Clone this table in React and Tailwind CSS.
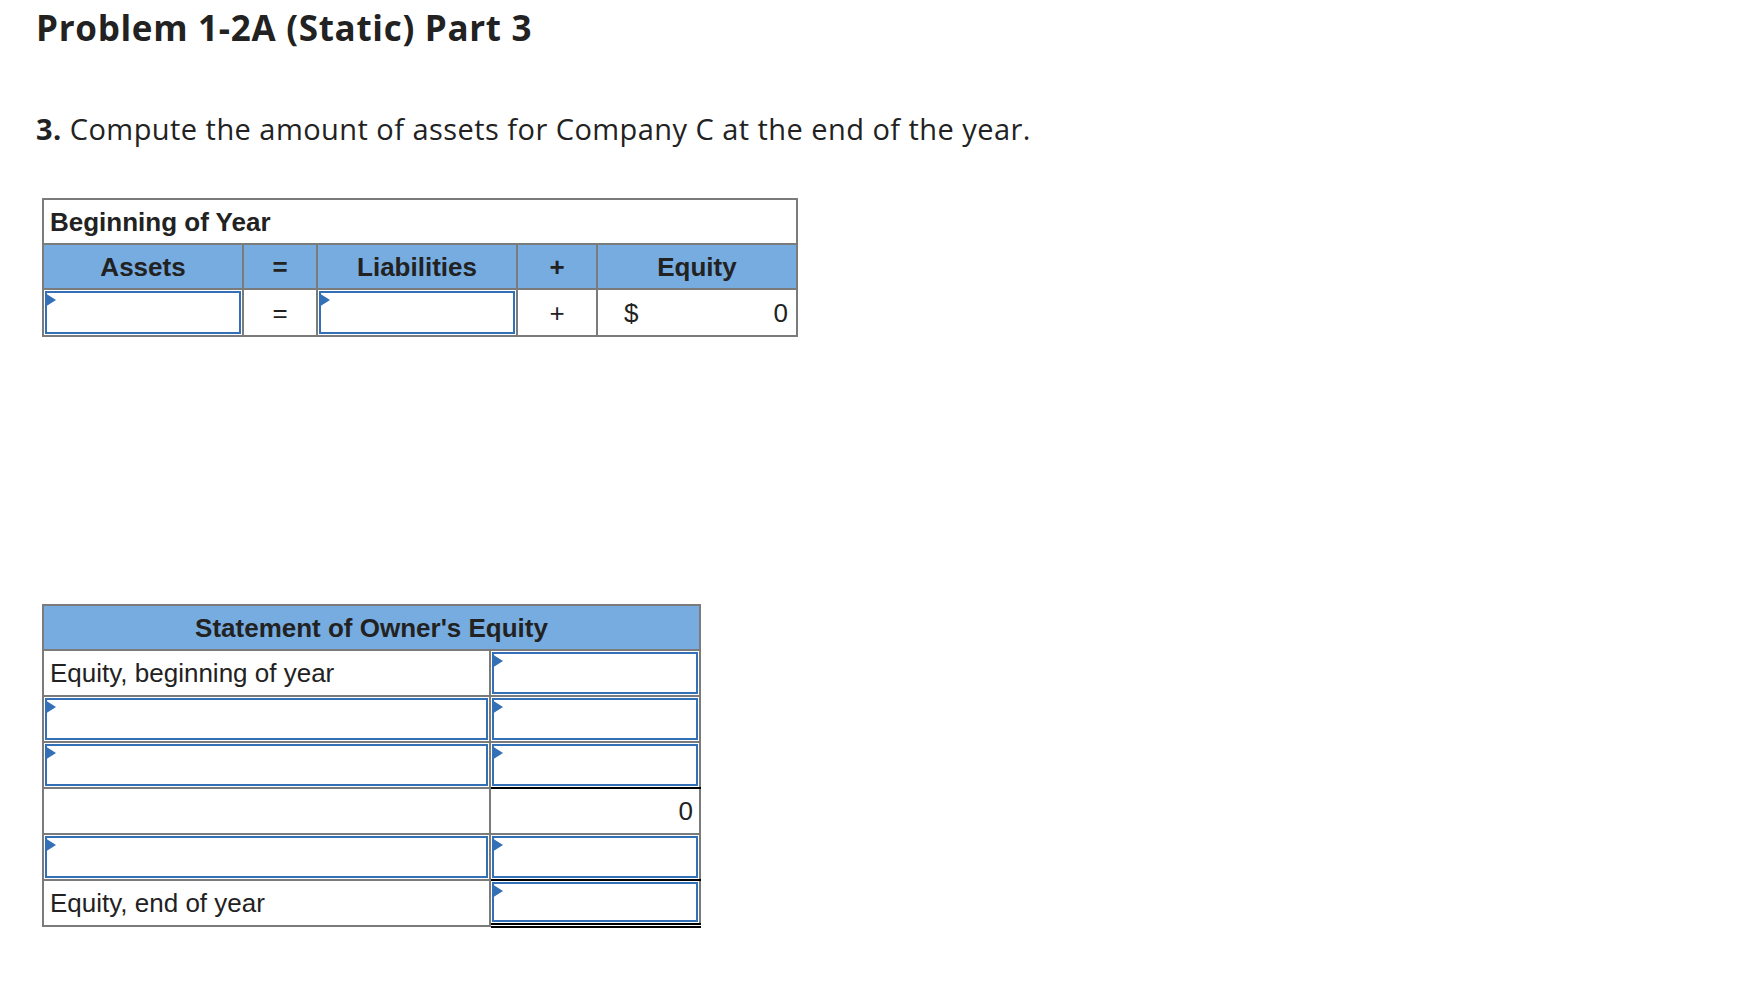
import React from 'react';

function Marker() {
  return (
    <span className="absolute -left-[2px] top-0 h-0 w-0 border-y-[7px] border-l-[11px] border-y-transparent border-l-[#3470b6]" />
  );
}

function InputBox({ className = '' }) {
  return (
    <div className={`h-full bg-white p-px ${className}`}>
      <div className="relative h-full border-2 border-[#3470b6] bg-white">
        <Marker />
      </div>
    </div>
  );
}

function EquationTable() {
  const head = 'flex items-center justify-center bg-[#77ace1] font-bold';
  const cell = 'flex items-center justify-center bg-white';
  return (
    <div className="grid w-fit grid-cols-[198px_72px_198px_78px_198px] grid-rows-[43px_43px_45px] gap-[2px] bg-[#7b7b7b] p-[2px] text-[26px] leading-none text-[#222]">
      <div className="col-span-5 flex items-center bg-white pl-[6px] font-bold">Beginning of Year</div>
      <div className={head}>Assets</div>
      <div className={head}>=</div>
      <div className={head}>Liabilities</div>
      <div className={head}>+</div>
      <div className={head}>Equity</div>
      <InputBox />
      <div className={cell}>=</div>
      <InputBox />
      <div className={cell}>+</div>
      <div className="flex items-center justify-between bg-white pl-[26px] pr-[8px]">
        <span>$</span>
        <span>0</span>
      </div>
    </div>
  );
}

function EquityStatement() {
  return (
    <div className="grid w-fit grid-cols-[445px_208px] grid-rows-[43px_repeat(6,44px)] gap-[2px] bg-[#7b7b7b] p-[2px] text-[26px] leading-none text-[#222]">
      <div className="col-span-2 flex items-center justify-center bg-[#77ace1] font-bold">Statement of Owner's Equity</div>

      <div className="flex items-center bg-white pl-[6px]">Equity, beginning of year</div>
      <InputBox />

      <InputBox />
      <InputBox />

      <InputBox />
      <InputBox />

      <div className="bg-white" />
      <div className="relative flex items-center justify-end bg-white pr-[6px]">
        <span className="absolute -top-[2px] left-0 -right-[2px] h-[2px] bg-black" />
        0
      </div>

      <InputBox />
      <InputBox />

      <div className="flex items-center bg-white pl-[6px]">Equity, end of year</div>
      <div className="relative bg-white pb-[2px]">
        <span className="absolute -top-[2px] left-0 -right-[2px] h-[2px] bg-black" />
        <InputBox />
        <span className="absolute -bottom-[3px] left-0 -right-[2px] h-[5px] border-y-2 border-black bg-white" />
      </div>
    </div>
  );
}

export default function App() {
  return (
    <div className="min-h-screen bg-white pl-[36px] pt-[8px] text-[#222]" style={{ fontFamily: '"Open Sans", Lato, sans-serif' }}>
      <h1 className="text-[35px] font-bold leading-[40px] tracking-[0.7px]">Problem 1-2A (Static) Part 3</h1>
      <p className="mt-[64px] text-[29px] leading-[34px] tracking-[0.45px]">
        <span className="font-bold">3.</span> Compute the amount of assets for Company C at the end of the year.
      </p>
      <div className="ml-[6px] mt-[52px]" style={{ fontFamily: '"Liberation Sans", Arial, sans-serif' }}>
        <EquationTable />
        <div className="mt-[267px]">
          <EquityStatement />
        </div>
      </div>
    </div>
  );
}
